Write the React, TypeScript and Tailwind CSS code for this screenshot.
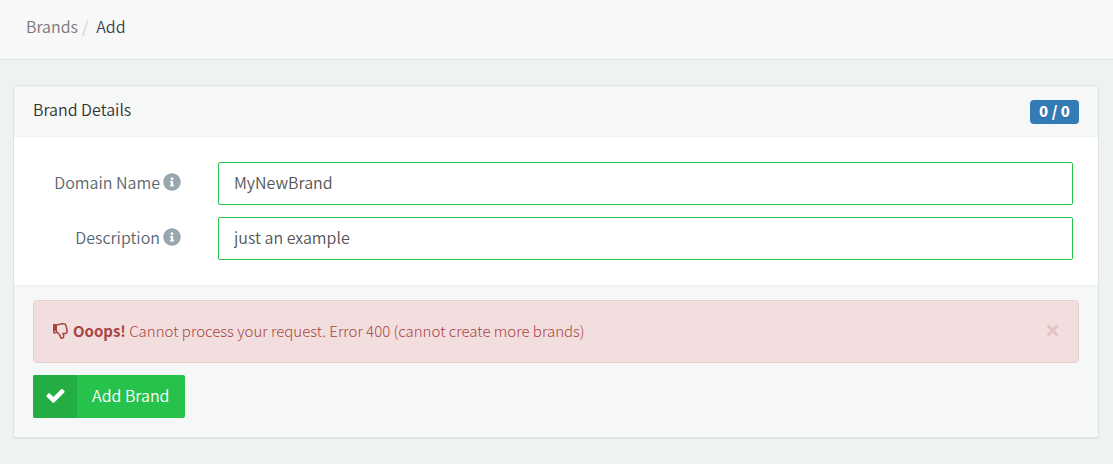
import { useState } from "react";
import { FaInfoCircle, FaRegThumbsDown } from "react-icons/fa";

const CHECK =
  "M1671 566q0 40-28 68l-724 724-136 136q-28 28-68 28t-68-28l-136-136-362-362q-28-28-28-68t28-68l136-136q28-28 68-28t68 28l294 295 656-657q28-28 68-28t68 28l136 136q28 28 28 68z";

function Field({ id, label, value }: { id: string; label: string; value: string }) {
  return (
    <div className="flex items-center">
      <label htmlFor={id} className="flex w-[148px] shrink-0 items-center justify-end gap-[3px] pb-1 text-[#58666e]">
        {label}
        <FaInfoCircle className="size-[18px] text-[#98a6ad]" aria-hidden="true" />
      </label>
      <input
        id={id}
        type="text"
        defaultValue={value}
        className="ml-[37px] h-[43px] min-w-0 flex-1 rounded-xs border border-[#27c24c] bg-white px-[15px] pb-1 text-[#555555] outline-none"
      />
    </div>
  );
}

export default function App() {
  const [open, setOpen] = useState(true);
  return (
    <div className="min-h-screen bg-[#eef2f3] font-['Noto_Sans_CJK_SC',sans-serif] text-base leading-6 font-[350] text-[#333333]">
      <nav aria-label="Breadcrumb" className="flex h-[60px] items-center border-b border-[#dee5e7] bg-[#f8f8f8] px-[26px] pb-2">
        <a href="#brands" className="text-[#777777]">Brands</a>
        <span className="px-1 text-[#cccccc]">/</span>
        <span className="pl-1 text-[#3a3f51]">Add</span>
      </nav>
      <main className="pt-[25px] pr-3.5 pb-[26px] pl-[13px]">
        <form
          onSubmit={(e) => e.preventDefault()}
          className="overflow-hidden rounded-xs border border-[#dee5e7] bg-[#f6f8f8] shadow-[0_1px_1px_rgba(0,0,0,0.05)]"
        >
          <header className="flex h-[51px] items-center justify-between border-b border-[#edf1f2] px-[19px]">
            <h1 className="pb-1 font-[350]">Brand Details</h1>
            <span className="mt-0.5 flex h-6 items-center rounded-sm bg-[#337ab7] px-[9px] pb-0.5 text-[15px] font-black text-white [text-shadow:0_1px_0_rgba(0,0,0,0.2)]">
              0 / 0
            </span>
          </header>
          <div className="flex flex-col gap-3 bg-white py-[25px] pr-[25px] pl-[19px]">
            <Field id="domain" label="Domain Name" value="MyNewBrand" />
            <Field id="description" label="Description" value="just an example" />
          </div>
          <footer className="border-t-2 border-[#edf1f2] px-[19px] pt-[13px] pb-[19px]">
            {open && (
              <div
                role="alert"
                className="mb-3 flex h-[63px] items-center rounded-sm border border-[#ebccd1] bg-[#f2dede] pr-[18px] pb-0.5 pl-[19px] text-[15px] font-light text-[#a94442] shadow-[inset_0_1px_0_rgba(255,255,255,0.2)]"
              >
                <FaRegThumbsDown className="mr-1 size-4 shrink-0" aria-hidden="true" />
                <p className="flex-1">
                  <strong className="font-bold">Ooops!</strong> Cannot process your request. Error 400 (cannot create more
                  brands)
                </p>
                <button type="button" aria-label="Close" onClick={() => setOpen(false)} className="pb-0.5 font-['Open_Sans',sans-serif] text-[26px] font-bold text-[#e5c1c2]">
                  ×
                </button>
              </div>
            )}
            <button type="submit" className="flex h-[43px] items-stretch overflow-hidden rounded-xs bg-[#27c24c] text-white">
              <span className="flex w-11 items-center justify-center bg-[#23ad44] pb-0.5">
                <svg viewBox="0 0 1792 1792" className="size-[21px] fill-current" aria-hidden="true">
                  <path d={CHECK} />
                </svg>
              </span>
              <span className="flex items-center pr-4 pb-1 pl-[15px]">Add Brand</span>
            </button>
          </footer>
        </form>
      </main>
    </div>
  );
}
